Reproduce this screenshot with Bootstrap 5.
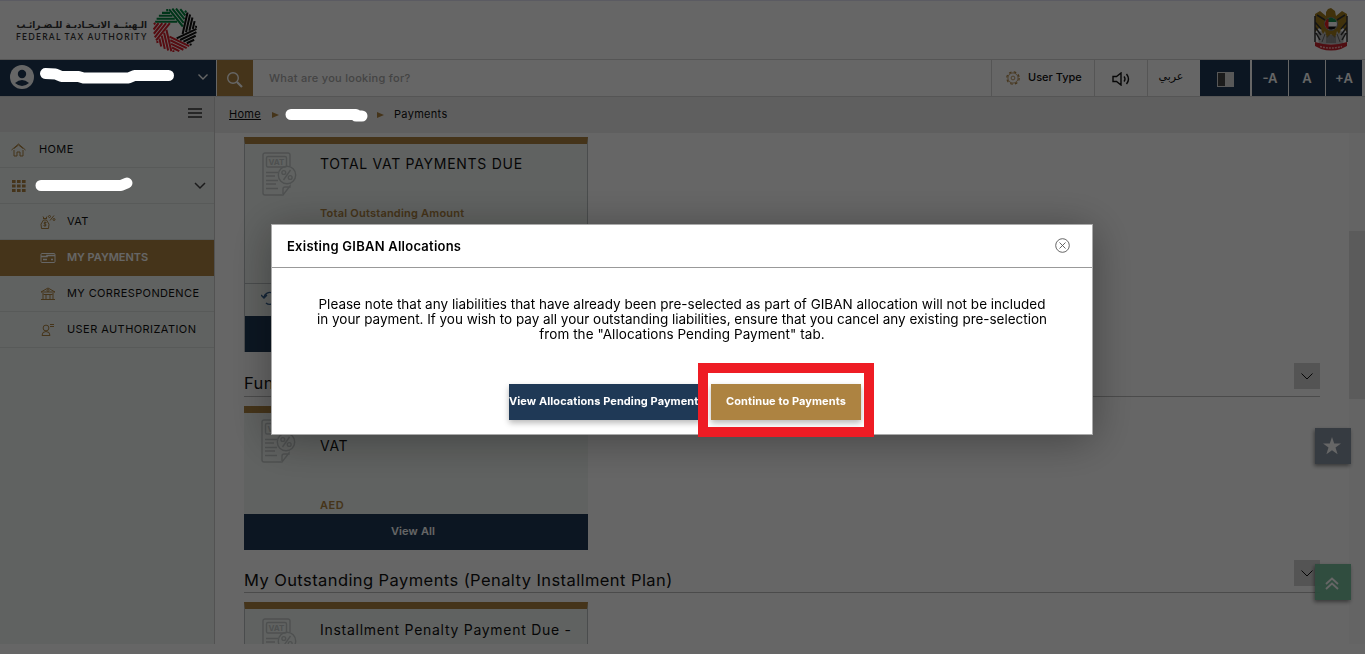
<!DOCTYPE html>
<html lang="en">
<head>
<meta charset="utf-8">
<title>Federal Tax Authority - Payments</title>
<meta name="viewport" content="width=device-width, initial-scale=1">
<link href="https://cdn.jsdelivr.net/npm/bootstrap@5.3.0/dist/css/bootstrap.min.css" rel="stylesheet">
<style>
:root{--navy:#1f3956;--gold:#ad8341;--mint:#f0f5f2}
body{font-family:Inter,"DejaVu Sans",sans-serif;font-size:11px;line-height:15px;color:#111;background:#fff;height:654px;overflow:hidden}
svg{display:block;flex:none}
.bg-navy{background:var(--navy)}.bg-gold{background:var(--gold)}
.text-gold{color:var(--gold)}
.topbar{height:60px;border-top:1px solid #e4e4f4;border-bottom:1px solid #d4d4d4;padding:0 17px 0 16px}
.wordmark{width:131px}
.logo-ar{font:bold 9.8px/13px "DejaVu Sans Condensed","DejaVu Sans",sans-serif;font-stretch:condensed;color:#333;white-space:nowrap}
.logo-en{font:600 8.5px/12px Lato,sans-serif;letter-spacing:1.28px;color:#333;white-space:nowrap}
.tools{height:37px;border-bottom:1px solid #d4d4d4}
.userbox{width:216px;margin-right:1px;padding:0 8px 0 10px}
.sq{width:36px}
.cell{border-left:1px solid #d4d4d4;margin-right:1px}
.hint{color:#aaa;letter-spacing:.28px}
.fsz{color:#fff;font-size:13px;font-weight:600}
.lang{font:11px/15px "DejaVu Sans",sans-serif}
.side{width:215px;background:var(--mint);border-right:1px solid #cdcdcd}
.burger{height:35px;background:#e7e7e7;padding:0 12px 3px 0}
.side a{height:36px;border-bottom:1px solid #dce1df;color:#111;text-decoration:none;padding-left:11px;letter-spacing:.38px}
.side a.sub{padding-left:40px}
.side a.active{background:var(--gold);color:#fff;font-weight:600;border-color:var(--gold);letter-spacing:-.05px}
.ic{width:16px;margin-right:12px}
.sub .ic{margin-right:11px}
.crumbs{height:36px;background:#eee;padding:0 0 1px 14px;letter-spacing:.3px}
.scroller{height:511px;overflow:hidden}
.content{padding:4px 29px 0 29px}
.pay{width:344px;border:1px solid #b9bfc0;border-top:7px solid var(--gold);background:var(--mint)}
.pay-h{font-size:14px;letter-spacing:.72px}
.sum{letter-spacing:.22px}
.btn-flat{border:0;border-radius:0;height:36px;font-size:11px;font-weight:700;color:#fff;line-height:15px;padding:0 0 2px;white-space:nowrap;letter-spacing:.08px}
.sect{height:31px;border-bottom:1px solid #bbb;font-size:16.5px;line-height:20px;letter-spacing:.42px}
.tog{width:26px;height:26px;background:#d3d3d3;margin-top:-3px}
.track{width:16px;background:#fafafa;padding-top:98px}
.thumb{height:168px;background:#e4e4e4}
.float-btn{width:36px;height:36px;right:14px;padding-right:2px;box-shadow:-1px 2px 4px rgba(0,0,0,.45)}
.veil{background:rgba(0,0,0,.6);z-index:10;padding:224px 0 0 271px}
.dlg{width:822px;height:211px;border:1px solid #aaa;background:#fff;box-shadow:0 5px 40px rgba(0,0,0,.35);color:#000}
.dlg-head{height:43px;border-bottom:1px solid #999;padding:0 22px 0 15px;font-size:13px;font-weight:600;letter-spacing:.24px}
.dlg-body{font-size:13.5px;line-height:15px;padding-top:29px;white-space:nowrap;letter-spacing:.01px}
.dlg-body .l2{letter-spacing:-.018px}.dlg-body .l3{letter-spacing:.06px}
.dlg-foot{padding:42px 0 0 237px}
.shade{box-shadow:0 3px 6px rgba(0,0,0,.28)}
.marks{z-index:30}
</style>
</head>
<body>
<svg width="0" height="0" class="position-absolute">
<defs>
<g id="blade" stroke-width="2.1"><path d="M-20.3-8.5H2.2M-18.8-11.5H-.2M-16.5-14.5H-2.6M-13.3-17.5H-5M-9-20.300H-7"/></g>
<g id="vatdoc" fill="none" stroke="#c3c8c8" stroke-width="1.4"><path d="M28 14V3a2 2 0 0 0-2-2H3a2 2 0 0 0-2 2v38a2 2 0 0 0 2 2h17M28 35v-1l-7 9v-6a2 2 0 0 1 2-2z"/><rect x="4.500" y="4.500" width="20" height="10.500" rx="1.500"/><path d="M4 20.500h12M4 24h9M4 28.500h12M4 32h10M4 36.500h12"/><circle cx="25" cy="23" r="8.700"/><path d="M28.500 18l-7 10"/><circle cx="21.800" cy="20.500" r="1.900"/><circle cx="28.200" cy="25.500" r="1.900"/><text x="14.500" y="12.800" font-size="8" font-weight="700" text-anchor="middle" fill="#c3c8c8" stroke="none" letter-spacing="0">VAT</text></g>
</defs>
</svg>

<header class="topbar d-flex justify-content-between align-items-center">
  <div class="d-flex align-items-center">
    <div class="wordmark"><div class="logo-ar" dir="rtl">الـهيئــة الاتـحـاديـة للـضـرائـب</div><div class="logo-en">FEDERAL TAX AUTHORITY</div></div>
    <svg width="44" height="44" viewBox="-22.500 -22.500 45 45" style="margin-left:6px">
      <g stroke="#00863f"><use href="#blade"/><use href="#blade" transform="rotate(51.4)"/></g>
      <g stroke="#111"><use href="#blade" transform="rotate(102.900)"/><use href="#blade" transform="rotate(154.300)"/></g>
      <g stroke="#d8202c"><use href="#blade" transform="rotate(205.700)"/><use href="#blade" transform="rotate(257.100)"/><use href="#blade" transform="rotate(308.600)"/></g>
    </svg>
  </div>
  <svg width="34" height="44" viewBox="0 0 34 44">
    <path d="M3 25l8-4h12l8 4-2 11H5z" fill="#bbb"/>
    <path d="M1 6l5-3 6 5V4l2-3 3-1 4 3 1 5 6-5 5 3v18l-5-5-3 7-2-3-2 7-4-4-4 4-2-7-2 3-3-7-5 5z" fill="#a07c1c"/>
    <path d="M1 8v26M33 8v26M1 14l6 7M1 19l6 8M2 25l4 7M33 14l-6 7M33 19l-6 8M32 25l-4 7M3 7l8 5M31 7l-8 5" stroke="#333" stroke-width="1.500"/>
    <path d="M11 26l-3 8M13 28v7M17 27v8M21 28v7M23 26l3 8M15 27v8M19 27v8" stroke="#666" stroke-width="1"/>
    <circle cx="17" cy="16" r="6.500" fill="#fff" stroke="#777"/><path d="M12 12.500a6 6 0 0 1 10 0l.500 1.500H13z" fill="#168a4a"/><path d="M12.500 18.500h10a6 6 0 0 1-9 2z" fill="#111"/><path d="M14.500 10.500v11a6 6 0 0 1 0-11z" fill="#e02020"/>
    <path d="M1 34q16 5 32 0v4l-6 3q-10 3-20 0l-6-3z" fill="#c8242e"/><path d="M6 38.500q11 3 22 0" stroke="#eaa" stroke-width="1.500" stroke-dasharray="2 1" fill="none"/>
  </svg>
</header>

<div class="tools d-flex align-items-stretch">
  <div class="userbox bg-navy d-flex align-items-center justify-content-between">
    <svg width="24" height="24" viewBox="0 0 24 24" style="margin-bottom:2px"><circle cx="12" cy="12" r="12" fill="#fff"/><circle cx="12" cy="9" r="4.200" fill="#1f3956"/><path d="M5 18q7-6 14 0-7 6-14 0z" fill="#1f3956"/></svg>
    <svg width="10" height="6" viewBox="0 0 10 6" style="margin-bottom:2px"><path d="M.5.5L5 5 9.500.5" stroke="#fff" stroke-width="1.400" fill="none"/></svg>
  </div>
  <div class="sq bg-gold d-flex align-items-center justify-content-center"><svg width="16" height="16" viewBox="0 0 16 16" class="mt-1"><circle cx="6" cy="6" r="5.300" fill="none" stroke="#fff" stroke-width="1.400"/><path d="M10 10l5 5" stroke="#fff" stroke-width="2.200"/></svg></div>
  <div class="hint flex-grow-1 d-flex align-items-center ps-3 fw-medium">What are you looking for?</div>
  <div class="cell d-flex align-items-center" style="width:102px;padding-left:14px">
    <svg width="14" height="14" viewBox="0 0 14 14" fill="none" stroke="#ad8341"><circle cx="7" cy="7" r="6.200" stroke-width="1.200" stroke-dasharray="2.600 2.270"/><circle cx="7" cy="7" r="5.100" stroke-width=".8"/><circle cx="7" cy="7" r="1.900" stroke-width=".8"/></svg>
    <span class="fw-medium" style="margin:0 0 2px 8px">User Type</span></div>
  <div class="cell d-flex align-items-center justify-content-center" style="width:52px"><svg width="18" height="14" viewBox="0 0 18 14" fill="none" stroke="#111" stroke-width="1.400" style="margin-top:2px"><path d="M1 4.500h3.500L9 1v12L4.500 9.500H1zM12 4.500q2 2.500 0 5M14.500 2q4 5 0 10"/></svg></div>
  <div class="cell lang d-flex align-items-center justify-content-center" style="width:52px;padding:0 5px 3px 0">عربي</div>
  <div class="bg-navy d-flex align-items-center justify-content-center" style="width:50px;margin-right:2px"><svg width="17" height="15" viewBox="0 0 17 15" style="margin-top:2px"><rect width="17" height="15" fill="#ddd"/><path d="M1 1h7v13H1z" fill="#444"/></svg></div>
  <div class="sq fsz bg-navy d-flex align-items-center justify-content-center" style="margin-right:1px">-A</div>
  <div class="sq fsz bg-navy d-flex align-items-center justify-content-center" style="margin-right:1px">A</div>
  <div class="sq fsz bg-navy d-flex align-items-center justify-content-center" style="margin-right:3px">+A</div>
</div>

<div class="d-flex" style="height:547px">
  <nav class="side flex-shrink-0">
    <div class="burger d-flex align-items-center justify-content-end"><svg width="14" height="10" viewBox="0 0 14 10"><path d="M0 1h14M0 5h14M0 9h14" stroke="#333" stroke-width="1.700"/></svg></div>
    <a href="#" class="d-flex align-items-center"><svg class="ic" width="16" height="14" viewBox="0 0 16 14" fill="none" stroke="#ad8341"><path d="M.5 7l7-6 7 6M3 7v6h3V9h3v4h3V7M3 5.500l4.500-3.500 4.500 3.500"/></svg><span>HOME</span></a>
    <a href="#" class="d-flex align-items-center justify-content-between"><svg width="14" height="12" viewBox="0 0 14 12" style="margin-left:1px"><path d="M0 1.500h14M0 6h14M0 10.500h14" stroke="#ad8341" stroke-width="3" stroke-dasharray="3.600 1.400"/></svg><svg class="me-2" width="12" height="8" viewBox="0 0 12 8"><path d="M1 1l5 5 5-5" stroke="#444" stroke-width="1.500" fill="none"/></svg></a>
    <a href="#" class="sub d-flex align-items-center"><svg class="ic" width="16" height="16" viewBox="0 0 16 16" fill="none" stroke="#ad8341"><path d="M3.500 6q-4 4-2 8.500h7q2-4.500-2-8.500zM3 4.500h4M3 2.500l1 2M7 2.500l-1 2M14 1.500l-4 5"/><path d="M6.500 8.500q-3-.5-2.500 1 2.500.5 2 2-1 1-2.500 0M5 7.500v5"/><circle cx="9.500" cy="2.500" r="1"/><circle cx="14" cy="5.500" r="1"/></svg><span>VAT</span></a>
    <a href="#" class="sub active d-flex align-items-center"><svg class="ic" width="16" height="10" viewBox="0 0 16 10" fill="none" stroke="#fff"><rect x="1" y=".5" width="14" height="9" rx="1"/><path d="M1 3.500h6v-1h8M3 6.500h4M11 6.500h2" stroke-width="1.500"/></svg><span>MY PAYMENTS</span></a>
    <a href="#" class="sub d-flex align-items-center"><svg class="ic" width="16" height="14" viewBox="0 0 16 14" fill="none" stroke="#ad8341"><path d="M1 5l7-4 7 4zM3 6v6M6 7.500v4.500M10 7.500v4.500M13 6v6M1 12.500h14M3.500 7.500h9"/><circle cx="8" cy="3.500" r="1"/></svg><span>MY CORRESPONDENCE</span></a>
    <a href="#" class="sub d-flex align-items-center"><svg class="ic" width="16" height="14" viewBox="0 0 16 14" fill="none" stroke="#ad8341"><circle cx="6" cy="5" r="2.900"/><path d="M2 12.500q0-4 4-4t4 4zM10 1.500h4M10 3.500h4"/></svg><span style="letter-spacing:.43px">USER AUTHORIZATION</span></a>
  </nav>
  <div class="flex-grow-1">
    <div class="crumbs d-flex align-items-center">
      <a href="#" class="text-reset">Home</a><svg width="7" height="6" viewBox="0 0 7 6" style="margin-left:11px"><path d="M0 0l7 3-7 3z" fill="#ad8341"/></svg><span style="width:98px"></span><svg width="7" height="6" viewBox="0 0 7 6" style="margin-right:10px"><path d="M0 0l7 3-7 3z" fill="#ad8341"/></svg><span>Payments</span>
    </div>
    <div class="d-flex scroller">
      <main class="content flex-grow-1">
        <div class="pay" style="height:215px;border-bottom:0">
          <div class="d-flex" style="height:140px;padding:8px 0 0 17px;border-bottom:1px solid #b9bfc0"><svg width="36" height="44" viewBox="0 0 36 44"><use href="#vatdoc"/></svg><div style="padding-left:22px"><div class="pay-h" style="padding-top:4px">TOTAL VAT PAYMENTS DUE</div><div class="sum text-gold fw-semibold" style="padding-top:35px">Total Outstanding Amount</div></div></div>
          <div style="height:32px;padding:5px 0 0 16px"><svg width="18" height="18" viewBox="0 0 18 18" fill="none" stroke="#34608f" stroke-width="1.400"><path d="M3 8a6 6 0 1 1 2 6M0 6l3 3 3-3"/></svg></div>
          <div class="btn-flat bg-navy"></div>
        </div>
        <div class="sect d-flex justify-content-between" style="margin-top:14px"><div style="padding-top:7px">Fund</div><div class="tog d-flex align-items-center justify-content-center"><svg width="12" height="7" viewBox="0 0 12 7"><path d="M.5.5L6 6l5.500-5.500" stroke="#111" fill="none"/></svg></div></div>
        <div class="pay border-start-0 border-end-0 border-bottom-0" style="height:144px;margin-top:9px">
          <div class="d-flex" style="height:101px;padding:6px 0 0 17px"><svg width="36" height="44" viewBox="0 0 36 44"><use href="#vatdoc"/></svg><div style="padding-left:23px"><div class="pay-h" style="padding-top:19px">VAT</div><div class="text-gold fw-semibold" style="padding-top:45px;letter-spacing:.5px">AED</div></div></div>
          <div class="btn-flat bg-navy d-flex align-items-center justify-content-center" style="font-weight:600;padding-right:6px;letter-spacing:.15px">View All</div>
        </div>
        <div class="sect d-flex justify-content-between" style="margin-top:12px"><div style="padding-top:8px">My Outstanding Payments (Penalty Installment Plan)</div><div class="tog d-flex align-items-center justify-content-center" style="margin-top:-2px"><svg width="12" height="7" viewBox="0 0 12 7"><path d="M.5.5L6 6l5.500-5.500" stroke="#111" fill="none"/></svg></div></div>
        <div class="pay" style="height:100px;margin-top:9px"><div class="d-flex" style="padding:9px 0 0 17px"><svg width="36" height="44" viewBox="0 0 36 44"><use href="#vatdoc"/></svg><div class="pay-h" style="padding:4px 0 0 22px">Installment Penalty Payment Due -</div></div></div>
      </main>
      <div class="track"><div class="thumb"></div></div>
    </div>
  </div>
</div>
<div class="float-btn position-fixed d-flex align-items-center justify-content-center" style="top:428px;background:#8793a3"><svg width="18" height="18" viewBox="0 0 18 18"><path d="M9 0l2.200 6.500H18l-5.500 4 2.100 6.800L9 13.200l-5.600 4.100 2.100-6.800L0 6.500h6.800z" fill="#fff"/></svg></div>
<div class="float-btn position-fixed d-flex align-items-center justify-content-center" style="top:564px;background:rgba(112,189,151,.93)"><svg width="14" height="13" viewBox="0 0 14 13" style="margin-top:2px"><path d="M1 7l6-5.500L13 7M1 12l6-5.500 6 5.500" stroke="#fff" stroke-width="1.800" fill="none"/></svg></div>

<div class="veil position-fixed top-0 start-0 w-100 h-100">
  <div class="dlg" role="dialog">
    <div class="dlg-head d-flex align-items-center justify-content-between"><span>Existing GIBAN Allocations</span><svg width="15" height="15" viewBox="0 0 15 15" fill="none" stroke="#555" stroke-width=".9" style="margin-bottom:1px"><circle cx="7.500" cy="7.500" r="6.800"/><path d="M4.500 4.500l6 6M10.500 4.500l-6 6"/></svg></div>
    <div class="dlg-body text-center">Please note that any liabilities that have already been pre-selected as part of GIBAN allocation will not be included<br><span class="l2">in your payment. If you wish to pay all your outstanding liabilities, ensure that you cancel any existing pre-selection</span><br><span class="l3">from the "Allocations Pending Payment" tab.</span></div>
    <div class="dlg-foot d-flex"><button class="btn btn-flat bg-navy shade text-start" style="width:192px;margin-right:10px">View Allocations Pending Payment</button><button class="btn btn-flat bg-gold shade" style="width:150px">Continue to Payments</button></div>
  </div>
</div>
<svg class="marks position-fixed top-0 start-0 pe-none" width="1365" height="654" viewBox="0 0 1365 654" fill="none" stroke="#fff" stroke-linecap="round" stroke-linejoin="round">
  <path d="M45.500 73.500l10 .5 6 2.500h17l5 1.500h45l6-2.500h34" stroke-width="11"/>
  <path d="M41 185.500h80l6-2.500" stroke-width="11"/><path d="M291 114.500h65M356 116h6" stroke-width="11"/>
  <rect x="703" y="368" width="166" height="64" stroke="#ee1c24" stroke-width="10" stroke-linejoin="miter"/>
</svg>
</body>
</html>
